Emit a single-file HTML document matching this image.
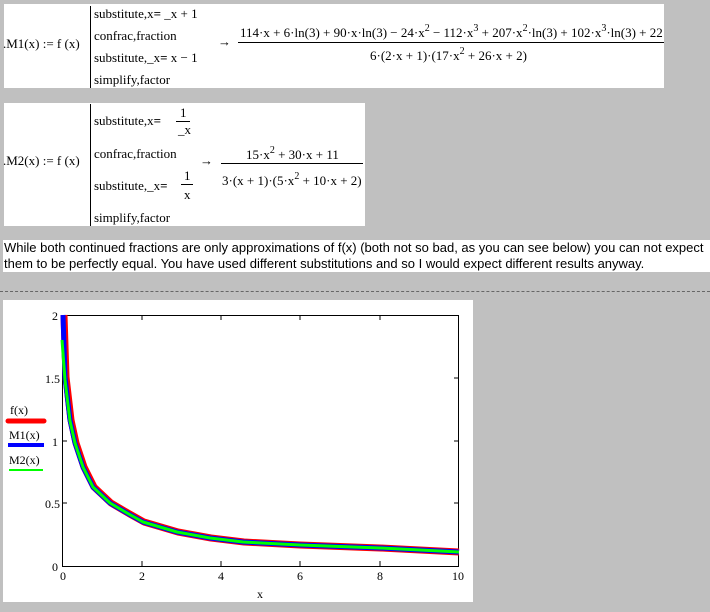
<!DOCTYPE html>
<html><head><style>
body{margin:0;width:710px;height:612px;background:#c0c0c0;position:relative;overflow:hidden;font-family:"Liberation Serif",serif;font-size:13px;color:#000}
.box{position:absolute;background:#fff}
.t{position:absolute;white-space:nowrap}
.vl{position:absolute;width:1px;background:#000}
.hl{position:absolute;height:1px;background:#000}
sup{font-size:10px;vertical-align:6px;line-height:0}
</style></head><body>
<div class="box" style="left:4px;top:4px;width:660px;height:84px"></div>
<div class="t" style="left:3px;top:36px">.M1(x) := f (x)</div>
<div class="vl" style="left:90px;top:6px;height:82px"></div>
<div class="t" style="left:94px;top:6px">substitute,x<b>=</b> _x + 1</div>
<div class="t" style="left:94px;top:28px">confrac,fraction</div>
<div class="t" style="left:94px;top:50px">substitute,_x<b>=</b> x − 1</div>
<div class="t" style="left:94px;top:72px">simplify,factor</div>
<div class="t" style="left:218px;top:34px">→</div>
<div class="t" style="left:240px;top:25px">114·x + 6·ln(3) + 90·x·ln(3) − 24·x<sup>2</sup> − 112·x<sup>3</sup> + 207·x<sup>2</sup>·ln(3) + 102·x<sup>3</sup>·ln(3) + 22</div>
<div class="hl" style="left:238px;top:42px;width:426px"></div>
<div class="t" style="left:370px;top:48px">6·(2·x + 1)·(17·x<sup>2</sup> + 26·x + 2)</div>

<div class="box" style="left:4px;top:103px;width:361px;height:123px"></div>
<div class="t" style="left:3px;top:153px">.M2(x) := f (x)</div>
<div class="vl" style="left:90px;top:104px;height:122px"></div>
<div class="t" style="left:94px;top:113px">substitute,x<b>=</b></div>
<div class="t" style="left:180px;top:105px">1</div>
<div class="hl" style="left:176px;top:121px;width:14px"></div>
<div class="t" style="left:178px;top:122px">_x</div>
<div class="t" style="left:94px;top:146px">confrac,fraction</div>
<div class="t" style="left:94px;top:178px">substitute,_x<b>=</b></div>
<div class="t" style="left:184px;top:168px">1</div>
<div class="hl" style="left:181px;top:184px;width:12px"></div>
<div class="t" style="left:184px;top:187px">x</div>
<div class="t" style="left:94px;top:210px">simplify,factor</div>
<div class="t" style="left:200px;top:153px">→</div>
<div class="t" style="left:246px;top:147px">15·x<sup>2</sup> + 30·x + 11</div>
<div class="hl" style="left:221px;top:163px;width:142px"></div>
<div class="t" style="left:222px;top:173px">3·(x + 1)·(5·x<sup>2</sup> + 10·x + 2)</div>

<div class="box" style="left:3px;top:240px;width:707px;height:32px"></div>
<div class="t" style="left:4px;top:240px;font-family:'Liberation Sans',sans-serif;font-size:13px;line-height:16px;letter-spacing:0">While both continued fractions are only approximations of f(x) (both not so bad, as you can see below) you can not expect<br>them to be perfectly equal. You have used different substitutions and so I would expect different results anyway.</div>
<div style="position:absolute;left:0;top:291px;width:710px;border-top:1px dashed #666"></div>

<div class="box" style="left:3px;top:300px;width:470px;height:302px"></div>
<svg style="position:absolute;left:0;top:0" width="710" height="612">
<g font-family="Liberation Serif" font-size="12" fill="#000">
<rect x="62.5" y="315.5" width="396" height="251" fill="none" stroke="#000"/>
<g stroke="#000">
<line x1="142" y1="315" x2="142" y2="320"/><line x1="221" y1="315" x2="221" y2="320"/><line x1="300" y1="315" x2="300" y2="320"/><line x1="380" y1="315" x2="380" y2="320"/>
<line x1="142" y1="566" x2="142" y2="561"/><line x1="221" y1="566" x2="221" y2="561"/><line x1="300" y1="566" x2="300" y2="561"/><line x1="380" y1="566" x2="380" y2="561"/>
<line x1="62" y1="378" x2="67" y2="378"/><line x1="62" y1="441" x2="67" y2="441"/><line x1="62" y1="503" x2="67" y2="503"/>
<line x1="459" y1="378" x2="454" y2="378"/><line x1="459" y1="441" x2="454" y2="441"/><line x1="459" y1="503" x2="454" y2="503"/>
</g>
<text x="52" y="320">2</text><text x="45" y="383">1.5</text><text x="52" y="446">1</text><text x="45" y="508">0.5</text><text x="52" y="571">0</text>
<text x="60" y="580">0</text><text x="139" y="580">2</text><text x="218" y="580">4</text><text x="297" y="580">6</text><text x="377" y="580">8</text><text x="452" y="580">10</text>
<text x="257" y="598">x</text>
<text x="10" y="414">f(x)</text><text x="9" y="439">M1(x)</text><text x="9" y="464">M2(x)</text>
</g>
<g fill="none" stroke-linejoin="round">
<polyline stroke="#f00" stroke-width="7" points="64,315 66,377 71,420 76,443 84,467 94,487 111,503 128,513 144,522 178,532 211,538 244,542 300,545 380,548 459,552"/>
<polyline stroke="#00f" stroke-width="5" points="63,315 65,377 70,420 75,443 83,467 93,487 110,503 127,513 143,522 177,532 210,538 243,542 300,545 380,548 459,552"/>
<polyline stroke="#0f0" stroke-width="3" points="62,340 65,380 70,421 75,443 83,467 93,487 110,503 127,513 143,522 177,532 210,538 243,542 300,545 380,548 459,552"/>
</g>
<line x1="8" y1="421" x2="44" y2="421" stroke="#f00" stroke-width="5" stroke-linecap="round"/>
<line x1="8" y1="445" x2="44" y2="445" stroke="#00f" stroke-width="4"/>
<line x1="9" y1="470" x2="43" y2="470" stroke="#0f0" stroke-width="2"/>
</svg>
</body></html>
